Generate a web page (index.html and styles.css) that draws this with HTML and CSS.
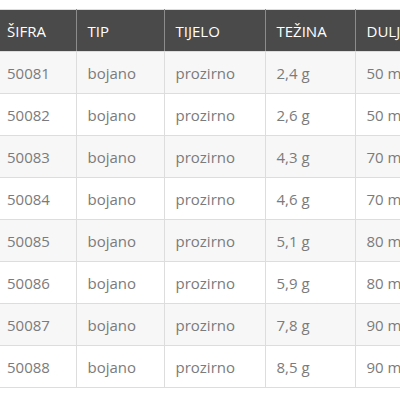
FILE: index.html
```html
<!DOCTYPE html>
<html>
<head>
<meta charset="utf-8">
<link rel="stylesheet" href="styles.css">
</head>
<body>
<div class="wrap">
<table class="spec">
<colgroup>
<col class="c1"><col class="c2"><col class="c3"><col class="c4"><col class="c5">
</colgroup>
<thead>
<tr><th>Šifra</th><th>Tip</th><th>Tijelo</th><th>Težina</th><th>Duljina</th></tr>
</thead>
<tbody>
<tr><td>50081</td><td>bojano</td><td>prozirno</td><td>2,4 g</td><td>50 mm</td></tr>
<tr><td>50082</td><td>bojano</td><td>prozirno</td><td>2,6 g</td><td>50 mm</td></tr>
<tr><td>50083</td><td>bojano</td><td>prozirno</td><td>4,3 g</td><td>70 mm</td></tr>
<tr><td>50084</td><td>bojano</td><td>prozirno</td><td>4,6 g</td><td>70 mm</td></tr>
<tr><td>50085</td><td>bojano</td><td>prozirno</td><td>5,1 g</td><td>80 mm</td></tr>
<tr><td>50086</td><td>bojano</td><td>prozirno</td><td>5,9 g</td><td>80 mm</td></tr>
<tr><td>50087</td><td>bojano</td><td>prozirno</td><td>7,8 g</td><td>90 mm</td></tr>
<tr><td>50088</td><td>bojano</td><td>prozirno</td><td>8,5 g</td><td>90 mm</td></tr>
</tbody>
</table>
</div>
</body>
</html>
```
FILE: styles.css
```css
html, body {
  margin: 0;
  padding: 0;
  background: #fff;
  overflow: hidden;
}
.wrap {
  padding-top: 9px;
  width: 480px;
}
.spec {
  border-collapse: collapse;
  table-layout: fixed;
  width: 465px;
  font-family: "Open Sans", "DejaVu Sans", sans-serif;
  font-size: 15px;
  border-top: 1px solid #ddd;
}
.c1 { width: 76px; }
.c2 { width: 88px; }
.c3 { width: 101px; }
.c4 { width: 90px; }
.c5 { width: 110px; }
.spec th {
  background: #4a4a4a;
  color: #fff;
  font-weight: normal;
  text-transform: uppercase;
  text-align: left;
  padding: 11px 11px 9px;
  line-height: 21px;
  border-left: 1px solid #8c8c8c;
  border-bottom: 1px solid #ddd;
}
.spec td {
  color: #7b7b7b;
  padding: 11px 11px 9px;
  line-height: 21px;
  border: 1px solid #ddd;
  white-space: nowrap;
}
.spec th:first-child, .spec td:first-child {
  padding-left: 7px;
  border-left: none;
}
.spec tbody tr:nth-child(odd) td {
  background: #f7f7f7;
}
```
